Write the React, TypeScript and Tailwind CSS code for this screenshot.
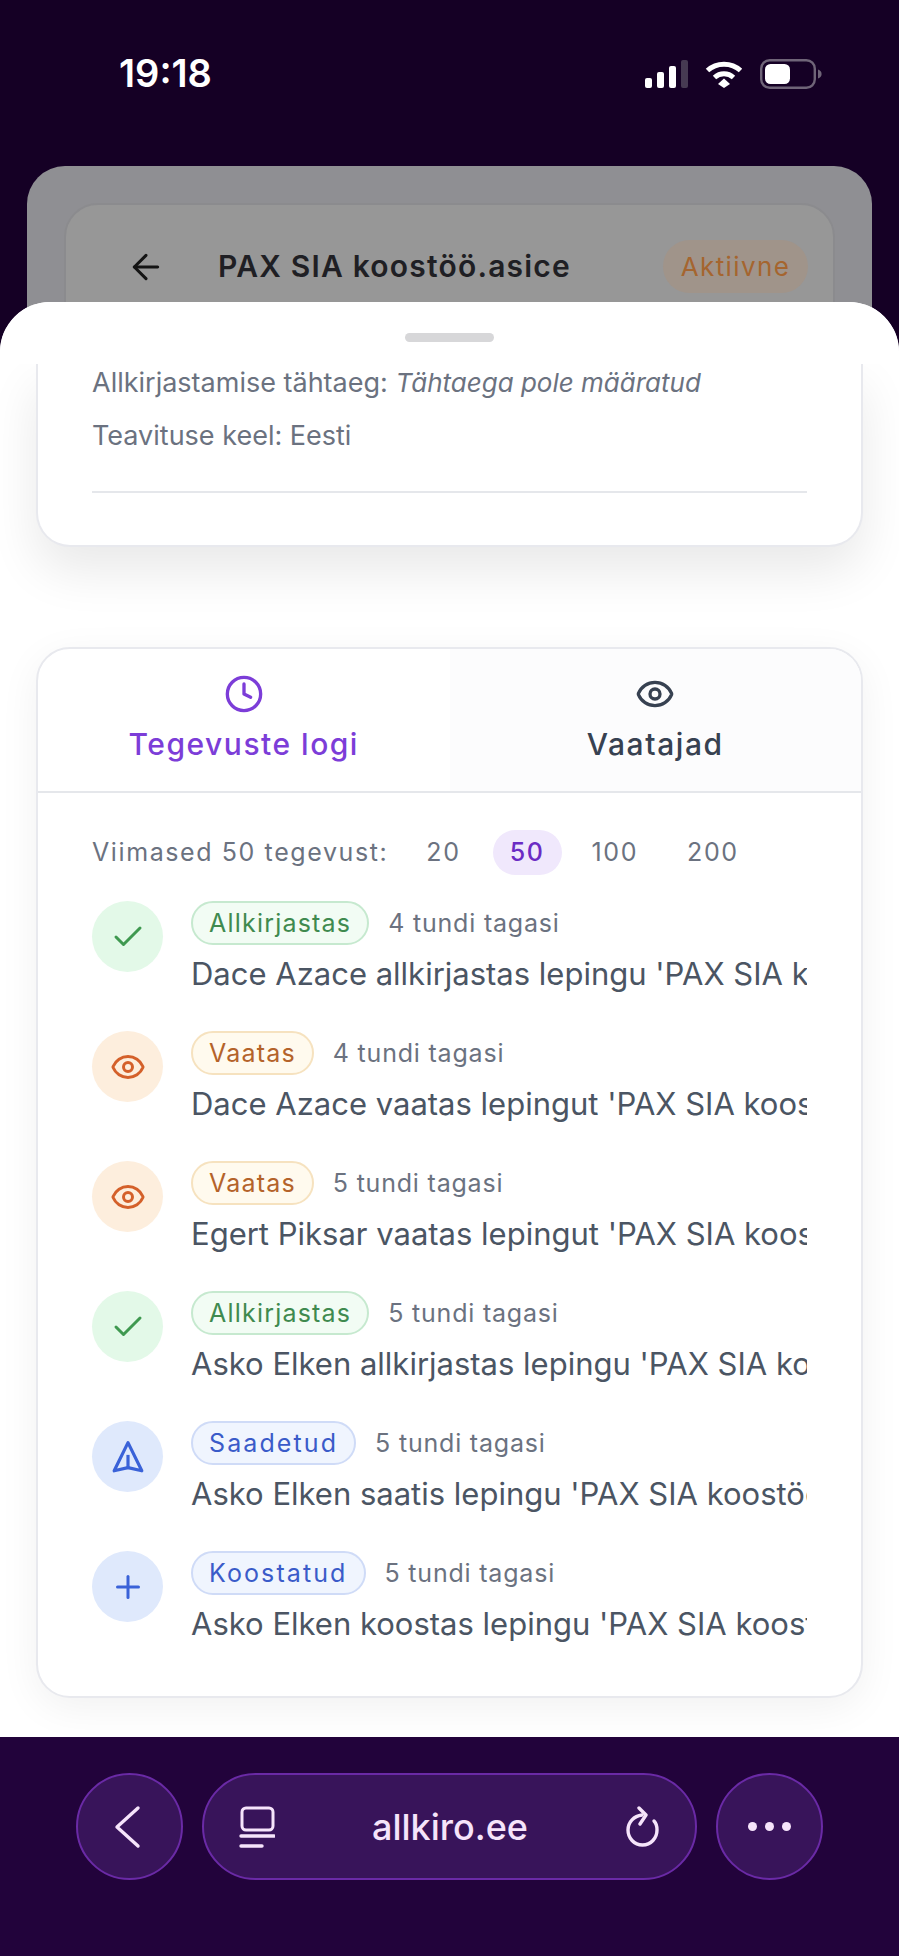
import { ArrowLeft, Check, Clock, Eye, Plus } from "lucide-react";
import type { ReactNode } from "react";

type Tone = "green" | "orange" | "blue";

const toneStyles: Record<Tone, { circle: string; pill: string }> = {
  green: {
    circle: "bg-[#e3f9e8] text-[#3f9950]",
    pill: "border-[#c6e9cf] bg-[#f2fcf4] text-[#3f8a4f] tracking-[1.2px]",
  },
  orange: {
    circle: "bg-[#fdeedd] text-[#d4602a]",
    pill: "border-[#f6e2bf] bg-[#fffaee] text-[#b4632a] tracking-[1.2px]",
  },
  blue: {
    circle: "bg-[#dfe9fc] text-[#3a62d8]",
    pill: "border-[#cfdbf7] bg-[#f0f5fe] text-[#3a5bc9] tracking-[2.1px]",
  },
};

const rows: { tone: Tone; icon: ReactNode; label: string; time: string; text: string }[] = [
  {
    tone: "green",
    icon: <Check size={36} />,
    label: "Allkirjastas",
    time: "4 tundi tagasi",
    text: "Dace Azace allkirjastas lepingu 'PAX SIA koostöö.asice'",
  },
  {
    tone: "orange",
    icon: <Eye size={36} />,
    label: "Vaatas",
    time: "4 tundi tagasi",
    text: "Dace Azace vaatas lepingut 'PAX SIA koostöö.asice'",
  },
  {
    tone: "orange",
    icon: <Eye size={36} />,
    label: "Vaatas",
    time: "5 tundi tagasi",
    text: "Egert Piksar vaatas lepingut 'PAX SIA koostöö.asice'",
  },
  {
    tone: "green",
    icon: <Check size={36} />,
    label: "Allkirjastas",
    time: "5 tundi tagasi",
    text: "Asko Elken allkirjastas lepingu 'PAX SIA koostöö.asice'",
  },
  {
    tone: "blue",
    icon: <SendIcon />,
    label: "Saadetud",
    time: "5 tundi tagasi",
    text: "Asko Elken saatis lepingu 'PAX SIA koostöö.asice'",
  },
  {
    tone: "blue",
    icon: <Plus size={36} />,
    label: "Koostatud",
    time: "5 tundi tagasi",
    text: "Asko Elken koostas lepingu 'PAX SIA koostöö.asice'",
  },
];

function SendIcon() {
  return (
    <svg width="34" height="34" viewBox="0 0 32 32" fill="none" stroke="currentColor" strokeWidth="3" strokeLinejoin="round">
      <path d="M16 2.5 29 29 16 26 3 29Z" />
      <path d="M16 14v12" />
    </svg>
  );
}

function StatusIcons() {
  return (
    <div className="flex items-center gap-[17px]">
      <svg width="44" height="30" viewBox="0 0 44 30" fill="#fff">
        <rect x="1" y="19" width="7" height="10" rx="2" />
        <rect x="13" y="13" width="7" height="16" rx="2" />
        <rect x="25" y="7" width="7" height="22" rx="2" />
        <rect x="37" y="1" width="7" height="28" rx="2" fill="#463a52" />
      </svg>
      <svg width="38" height="30" viewBox="0 0 38 30" fill="none" stroke="#fff" strokeWidth="5">
        <path d="M2.5 11.5C11.5 3 26.5 3 35.5 11.5" />
        <path d="M9.5 18.5C15 13.5 23 13.5 28.5 18.5" />
        <path d="M13 26 19 20.5 25 26 19 30Z" fill="#fff" stroke="none" transform="translate(0 -1)" />
      </svg>
      <svg width="62" height="30" viewBox="0 0 62 30" fill="none">
        <rect x="1.2" y="1.2" width="53.6" height="27.6" rx="8.5" stroke="#6f6478" strokeWidth="2.4" />
        <rect x="5" y="5" width="25" height="20" rx="5.5" fill="#fff" />
        <path d="M58 10.5c2.4.8 3.6 2.4 3.6 4.5s-1.2 3.7-3.6 4.5Z" fill="#6f6478" />
      </svg>
    </div>
  );
}

function LogRow({ tone, icon, label, time, text }: (typeof rows)[number]) {
  const style = toneStyles[tone];
  return (
    <div className="flex h-[71px] gap-[28px]">
      <div className={`flex h-[71px] w-[71px] shrink-0 items-center justify-center rounded-full ${style.circle}`}>{icon}</div>
      <div className="min-w-0 flex-1">
        <div className="flex items-center gap-[19px]">
          <span className={`flex h-[44px] items-center rounded-full border-2 px-[16px] pt-[2px] font-['Inter'] text-[25px] ${style.pill}`}>
            {label}
          </span>
          <span className="pt-[2px] font-['Inter'] text-[25px] tracking-[0.8px] text-[#6b7280]">{time}</span>
        </div>
        <div className="mt-[10px] overflow-hidden whitespace-nowrap font-['Inter'] text-[31px] leading-[38px] text-[#4b5563]">
          {text}
        </div>
      </div>
    </div>
  );
}

export default function App() {
  return (
    <div className="flex h-[1956px] w-[899px] flex-col overflow-hidden bg-[#150025]">
      <div className="flex h-[147px] shrink-0 items-center justify-between pl-[119px] pr-[77px]">
        <span className="font-['Inter'] text-[38px] font-semibold text-white">19:18</span>
        <StatusIcons />
      </div>
      <div className="mt-[19px] h-[196px] shrink-0 overflow-hidden px-[27px]">
        <div className="h-full rounded-t-[38px] bg-[#8f8f93] px-[37px] pt-[37px]">
          <div className="flex h-full items-start rounded-t-[34px] border-2 border-[#8b8b8e] bg-[#979797] pl-[60px] pr-[25px] pt-[35px]">
            <div className="flex h-[53px] items-center text-[#141414]">
              <ArrowLeft size={40} strokeWidth={1.8} />
            </div>
            <div className="ml-[52px] flex h-[53px] items-center font-['Inter'] text-[30px] font-semibold tracking-[1.2px] text-[#1f1f24]">
              PAX SIA koostöö.asice
            </div>
            <div className="ml-auto flex h-[53px] w-[145px] items-center justify-center rounded-full bg-[#a0948a] font-['Inter'] text-[26px] tracking-[1.4px] text-[#a5652f]">
              Aktiivne
            </div>
          </div>
        </div>
      </div>
      <div className="relative -mt-[60px] flex flex-1 flex-col overflow-hidden rounded-t-[50px] bg-white">
        <div className="relative z-10 flex h-[62px] shrink-0 justify-center bg-white pt-[31px]">
          <div className="h-[9px] w-[89px] rounded-full bg-[#d7d7d9]" />
        </div>
        <div className="flex-1 overflow-hidden bg-white px-[36px]">
          <div className="h-[183px] rounded-b-[34px] border-2 border-t-0 border-[#e8e9ee] bg-white px-[54px] shadow-[0_24px_50px_rgba(0,0,0,0.09)]">
            <p className="font-['Inter'] text-[27px] leading-[38px] text-[#6b7280]">
              Allkirjastamise tähtaeg: <em className="text-[26px]">Tähtaega pole määratud</em>
            </p>
            <p className="mt-[15px] font-['Inter'] text-[27px] leading-[38px] text-[#6b7280]">Teavituse keel: Eesti</p>
            <div className="mt-[36px] h-[2px] bg-[#e5e7eb]" />
          </div>
          <div className="mt-[100px] h-[1051px] overflow-hidden rounded-[34px] border-2 border-[#e8e9ee] bg-white shadow-[0_10px_40px_rgba(0,0,0,0.06)]">
            <div className="flex h-[144px] border-b-2 border-[#e5e7eb]">
              <div className="flex flex-1 flex-col items-center pt-[25px] text-[#7c3dd8]">
                <Clock size={40} />
                <span className="mt-[8px] font-['Inter'] text-[30px] font-medium tracking-[1.5px]">Tegevuste logi</span>
              </div>
              <div className="flex flex-1 flex-col items-center bg-[#fcfcfd] pt-[25px] text-[#374151]">
                <Eye size={40} />
                <span className="mt-[8px] font-['Inter'] text-[30px] font-medium tracking-[1.6px]">Vaatajad</span>
              </div>
            </div>
            <div className="px-[54px]">
              <div className="mt-[37px] flex h-[45px] items-center font-['Inter'] text-[25px] tracking-[1.6px] text-[#6b7280]">
                <span>Viimased 50 tegevust:</span>
                <span className="ml-[38px]">20</span>
                <span className="ml-[32px] flex h-[45px] w-[69px] items-center justify-center rounded-full bg-[#f0e8fc] font-medium text-[#6b2bc4]">50</span>
                <span className="ml-[30px]">100</span>
                <span className="ml-[49px]">200</span>
              </div>
              <div className="mt-[26px] flex flex-col gap-[59px]">
                {rows.map((row, i) => (
                  <LogRow key={i} {...row} />
                ))}
              </div>
            </div>
          </div>
        </div>
      </div>
      <div className="flex h-[219px] shrink-0 items-start gap-[19px] bg-[#22033b] pl-[76px] pt-[36px] text-[#f6e4fb]">
        <div className="flex h-[107px] w-[107px] items-center justify-center rounded-full border-2 border-[#6a2aa6] bg-[#38145a]">
          <svg width="28" height="44" viewBox="0 0 28 44" fill="none" stroke="currentColor" strokeWidth="3.4" strokeLinecap="round" strokeLinejoin="round" className="-ml-[6px]">
            <path d="M25 3 4 22l21 19" />
          </svg>
        </div>
        <div className="flex h-[107px] w-[495px] items-center justify-between rounded-full border-2 border-[#6a2aa6] bg-[#38145a] pl-[35px] pr-[34px]">
          <svg width="36" height="42" viewBox="0 0 36 42" fill="none" stroke="currentColor" strokeLinecap="round">
            <rect x="3" y="2" width="31" height="22" rx="4" strokeWidth="3" />
            <path d="M2 30h33" strokeWidth="3.4" />
            <path d="M2 40h21" strokeWidth="3.4" />
          </svg>
          <span className="font-['Inter'] text-[36px] font-medium">allkiro.ee</span>
          <svg width="36" height="42" viewBox="0 0 36 42" fill="none" stroke="currentColor" strokeWidth="3.4" strokeLinecap="round" strokeLinejoin="round">
            <path d="M17 9C9 10 3 16 3 24c0 8 6 15 14.5 15S32 32 32 24c0-4-1-7-3-9" />
            <path d="M14 2l7 7-6 9" />
          </svg>
        </div>
        <div className="flex h-[107px] w-[107px] items-center justify-center gap-[8px] rounded-full border-2 border-[#6a2aa6] bg-[#38145a]">
          <span className="h-[9px] w-[9px] rounded-full bg-[#f6e4fb]" />
          <span className="h-[9px] w-[9px] rounded-full bg-[#f6e4fb]" />
          <span className="h-[9px] w-[9px] rounded-full bg-[#f6e4fb]" />
        </div>
      </div>
    </div>
  );
}
